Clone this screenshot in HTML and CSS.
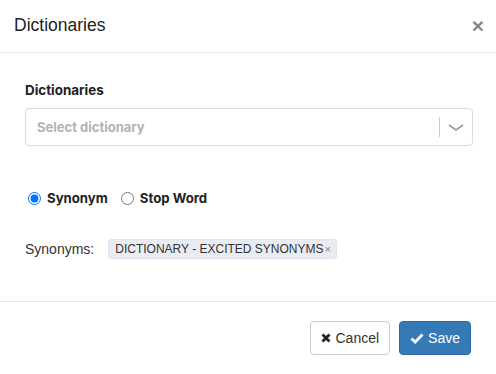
FILE: index.html
```html
<!DOCTYPE html>
<html lang="en">
<head>
  <meta charset="UTF-8">
  <title>Dictionaries</title>
  <link rel="stylesheet" href="styles.css">
</head>
<body>

  <div class="modal">
    <div class="modal-header">
      <h4 class="modal-title">Dictionaries</h4>
      <span class="close">&times;</span>
    </div>

    <div class="modal-body">
      <label class="field-label">Dictionaries</label>
      <div class="select">
        <span class="placeholder">Select dictionary</span>
        <span class="select-sep"></span>
        <span class="select-arrow">
          <svg width="16" height="8" viewBox="0 0 16 8"><path d="M1 1 L8 6 L15 1" fill="none" stroke="#999" stroke-width="1.6"/></svg>
        </span>
      </div>

      <div class="radios">
        <label class="radio"><input type="radio" name="kind" checked> Synonym</label>
        <label class="radio"><input type="radio" name="kind"> Stop Word</label>
      </div>

      <div class="synonyms">
        <span class="syn-label">Synonyms:</span>
        <span class="tag">DICTIONARY - EXCITED SYNONYMS<span class="tag-x">&times;</span></span>
      </div>
    </div>

    <div class="modal-footer">
      <button class="btn btn-default">
        <svg width="10" height="10" viewBox="0 0 10 10"><path d="M1.5 1.5 L8.5 8.5 M8.5 1.5 L1.5 8.5" stroke="#222" stroke-width="2.8"/></svg>
        Cancel
      </button>
      <button class="btn btn-primary">
        <svg width="14" height="11" viewBox="0 0 14 11"><path d="M1.5 5.5 L5.2 9 L12.5 1.5" fill="none" stroke="#fff" stroke-width="2.8"/></svg>
        Save
      </button>
    </div>
  </div>

</body>
</html>
```

FILE: styles.css
```css
* {
  box-sizing: border-box;
}

body {
  margin: 0;
  font-family: "Liberation Sans", Arial, sans-serif;
  font-size: 14px;
  color: #333;
  background: #fff;
}

.modal {
  width: 496px;
  height: 374px;
  display: flex;
  flex-direction: column;
}

.modal-header {
  display: flex;
  justify-content: space-between;
  align-items: center;
  padding: 14px 12px 15px 14px;
  border-bottom: 1px solid #e5e5e5;
}

.modal-title {
  margin: 0;
  font-size: 17.5px;
  font-weight: normal;
  line-height: 23px;
  color: #222;
}

.close {
  font-size: 21px;
  font-weight: bold;
  line-height: 1;
  color: #888;
}

.modal-body {
  flex: 1;
  padding: 27px 23px 0 25px;
}

.field-label {
  display: block;
  font-family: Inter, "Noto Sans", sans-serif;
  font-weight: 700;
  font-size: 13.4px;
  line-height: 20px;
  color: #222;
  margin-bottom: 8px;
}

.select {
  height: 38px;
  border: 1px solid #dcdcdc;
  border-radius: 4px;
  display: flex;
  align-items: center;
  padding-left: 11px;
}

.placeholder {
  flex: 1;
  font-family: Inter, "Noto Sans", sans-serif;
  font-weight: 700;
  font-size: 13px;
  color: #b3b3b3;
}

.select-sep {
  width: 1px;
  height: 20px;
  background: #ccc;
}

.select-arrow {
  width: 32px;
  display: flex;
  justify-content: center;
  padding-top: 2px;
}

.radios {
  display: flex;
  gap: 10px;
  margin-top: 44px;
  font-family: Inter, "Noto Sans", sans-serif;
  font-weight: 700;
  font-size: 13.2px;
  color: #222;
}

.radio {
  display: flex;
  align-items: center;
}

.radio input {
  width: 13px;
  height: 13px;
  margin: 0 6px 0 3px;
}

.synonyms {
  display: flex;
  align-items: center;
  gap: 14px;
  margin-top: 33px;
}

.tag {
  display: inline-flex;
  align-items: center;
  height: 20px;
  padding: 0 5px 0 6px;
  background: #e9ecf2;
  border: 1px solid #e0e3ea;
  border-radius: 3px;
  font-size: 12px;
  color: #333;
}

.tag-x {
  color: #888;
  font-size: 11px;
  margin-left: 1px;
}

.modal-footer {
  display: flex;
  justify-content: flex-end;
  gap: 9px;
  padding: 19px 25px 19px 25px;
  border-top: 1px solid #e5e5e5;
}

.btn {
  height: 34px;
  display: inline-flex;
  align-items: center;
  gap: 4px;
  padding: 0 10px;
  font-family: "Liberation Sans", Arial, sans-serif;
  font-size: 14px;
  border-radius: 4px;
  border: 1px solid #ccc;
}

.btn-default {
  background: #fff;
  color: #333;
}

.btn-primary {
  background: #337ab7;
  border-color: #2e6da4;
  color: #fff;
}
```
